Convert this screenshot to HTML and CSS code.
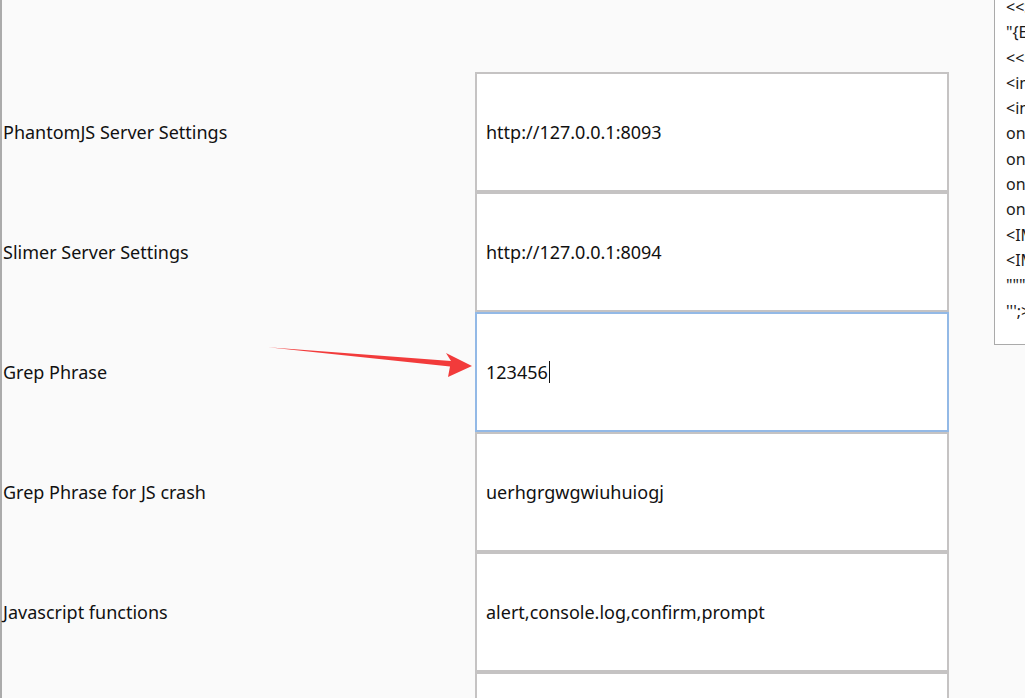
FILE: index.html
```html
<!DOCTYPE html>
<html>
<head>
<meta charset="utf-8">
<link rel="stylesheet" href="styles.css">
</head>
<body>
<div class="page">
  <div class="form">
    <div class="row">
      <div class="label">PhantomJS Server Settings</div>
      <div class="field">http://127.0.0.1:8093</div>
    </div>
    <div class="row">
      <div class="label">Slimer Server Settings</div>
      <div class="field">http://127.0.0.1:8094</div>
    </div>
    <div class="row">
      <div class="label">Grep Phrase</div>
      <div class="field focused">123456<span class="caret"></span></div>
    </div>
    <div class="row">
      <div class="label">Grep Phrase for JS crash</div>
      <div class="field">uerhgrgwgwiuhuiogj</div>
    </div>
    <div class="row">
      <div class="label">Javascript functions</div>
      <div class="field">alert,console.log,confirm,prompt</div>
    </div>
    <div class="row">
      <div class="label"></div>
      <div class="field"></div>
    </div>
  </div>
  <div class="panel">
    <div class="line">&lt;&lt;SCRIPT&gt;alert("XSS");//&lt;&lt;/SCRIPT&gt;</div>
    <div class="line">"{ExternalPayload}"</div>
    <div class="line">&lt;&lt;img src=x onerror=alert(1)&gt;</div>
    <div class="line">&lt;img src="javascript:alert(1)"&gt;</div>
    <div class="line">&lt;input onfocus=alert(1) autofocus&gt;</div>
    <div class="line">onerror=alert(1)</div>
    <div class="line">onload=alert(1)</div>
    <div class="line">onmouseover=alert(1)</div>
    <div class="line">onfocus=alert(1)</div>
    <div class="line">&lt;IMG SRC=javascript:alert('XSS')&gt;</div>
    <div class="line">&lt;IMG """&gt;&lt;SCRIPT&gt;alert("XSS")</div>
    <div class="line">""";alert(1)//</div>
    <div class="line">''';&gt;</div>
  </div>
</div>
<svg class="arrow" width="220" height="40" viewBox="260 340 220 40">
  <path d="M268 347.3 L451 361 L446 353 L472 366 L448 377 L450 366.5 Z" fill="#f23b3b"/>
</svg>
</body>
</html>
```

FILE: styles.css
```css
html, body {
  margin: 0;
  padding: 0;
  height: 100%;
  overflow: hidden;
  background: #fafafa;
}

body {
  font-family: "Noto Sans", "Open Sans", sans-serif;
  color: #111;
  position: relative;
}

.page {
  display: flex;
  align-items: flex-start;
  border-left: 2px solid #ababab;
  height: 100%;
  box-sizing: border-box;
}

.form {
  width: 992px;
  flex-shrink: 0;
  padding-top: 72px;
}

.row {
  display: flex;
  align-items: center;
  height: 120px;
}

.label {
  width: 473px;
  padding-left: 1px;
  box-sizing: border-box;
  font-size: 18px;
  flex-shrink: 0;
}

.field {
  box-sizing: border-box;
  width: 474px;
  height: 120px;
  background: #fff;
  border: 2px solid #c5c3c3;
  padding-left: 9px;
  display: flex;
  align-items: center;
  font-size: 18px;
}

.field.focused {
  border-color: #93b9e6;
}

.caret {
  display: inline-block;
  width: 1px;
  height: 22px;
  background: #111;
  margin-left: 1px;
}

.panel {
  flex-shrink: 0;
  width: 300px;
  margin-top: -5px;
  padding: 0 0 20px 11px;
  background: #fff;
  border-left: 1px solid #aaa;
  border-bottom: 1px solid #aaa;
  font-size: 16px;
  line-height: 25.3px;
  color: #1a1a1a;
  white-space: nowrap;
}

.arrow {
  position: absolute;
  left: 260px;
  top: 340px;
}
```
